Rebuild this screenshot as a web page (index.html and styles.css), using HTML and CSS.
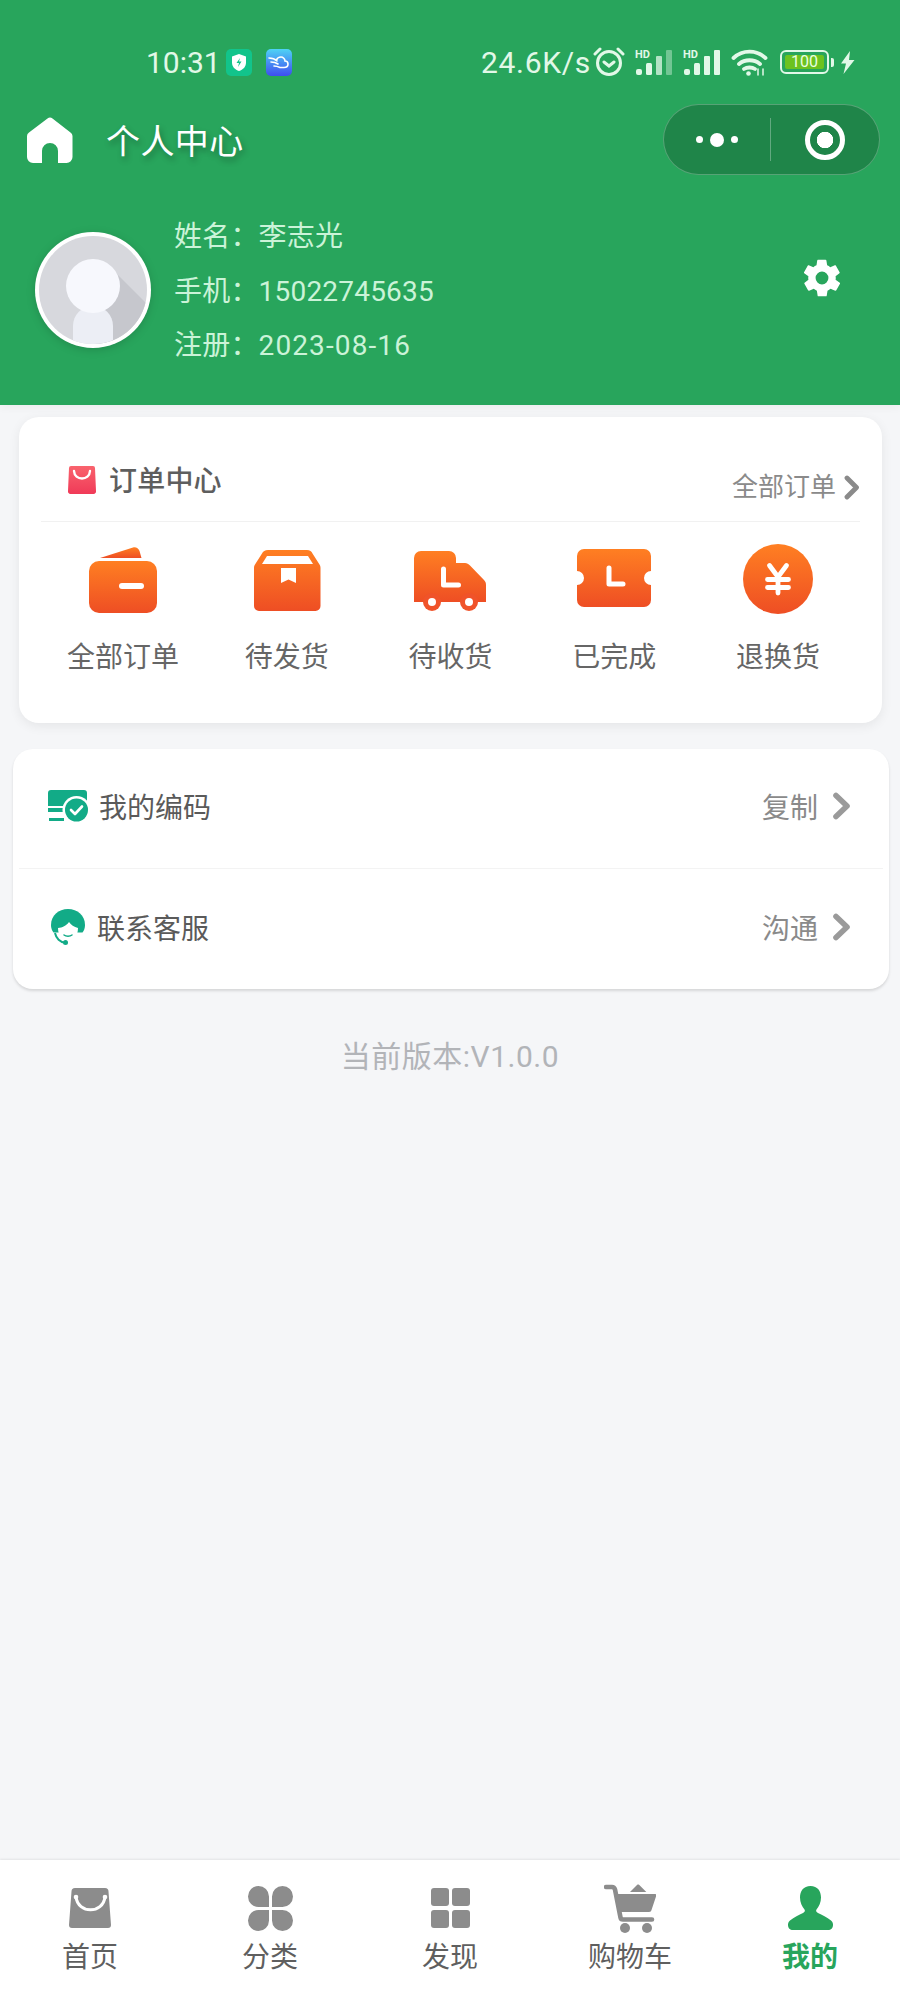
FILE: index.html
```html
<!DOCTYPE html>
<html lang="zh-CN">
<head>
    <meta charset="UTF-8">
    <meta name="viewport" content="width=device-width, initial-scale=1.0">
    <title>个人中心</title>
    <link rel="stylesheet" href="styles.css">
</head>
<body>
    <svg width="0" height="0" class="defs">
        <defs>
            <linearGradient id="orange" x1="0" y1="0" x2="0" y2="1">
                <stop offset="0" stop-color="#ff7f22"/>
                <stop offset="1" stop-color="#ee4e24"/>
            </linearGradient>
            <linearGradient id="pink" x1="0" y1="0" x2="0" y2="1">
                <stop offset="0" stop-color="#f9636d"/>
                <stop offset="1" stop-color="#f03a58"/>
            </linearGradient>
            <linearGradient id="cloud" x1="0" y1="0" x2="0" y2="1">
                <stop offset="0" stop-color="#4fd3f5"/>
                <stop offset="1" stop-color="#3f4cf0"/>
            </linearGradient>
        </defs>
    </svg>

    <div class="header">
        <div class="status-bar">
            <div class="status-left">
                <span class="time">10:31</span>
                <svg class="app-icon" width="26" height="27" viewBox="0 0 26 27">
                    <rect width="26" height="27" rx="5" fill="#12c48b"/>
                    <path d="M13 5l7 2.500v6c0 4.500-3 7-7 8.500-4-1.500-7-4-7-8.500v-6z" fill="#fff"/>
                    <path d="M14 9l-3.500 5h2.500l-1 4 3.500-5.500h-2.500z" fill="#12c48b"/>
                </svg>
                <svg class="app-icon second" width="26" height="27" viewBox="0 0 26 27">
                    <rect width="26" height="27" rx="5" fill="url(#cloud)"/>
                    <path d="M3 9c4 0 6 1 8 3M5 13c3 0 5 .5 7 2M8 17c2 0 4 .5 6 1.500h4c3 0 4-2 4-3.500 0-2-1.500-3-3-3 0-2-2-4-4-4-2.500 0-4 1.500-4.500 3" fill="none" stroke="#fff" stroke-width="1.600" stroke-linecap="round"/>
                </svg>
            </div>
            <div class="status-right">
                <span class="speed">24.6K/s</span>
                <svg class="alarm" width="32" height="30" viewBox="0 0 32 30" fill="none" stroke="#e2f8e8" stroke-width="3" stroke-linecap="round">
                    <circle cx="16" cy="16" r="11.500"/>
                    <path d="M11 15l5 4 5-4M2 7l5-5M30 7l-5-5"/>
                </svg>
                <svg class="signal" width="40" height="26" viewBox="0 0 40 26">
                    <text x="1" y="9" class="hd">HD</text>
                    <rect x="2" y="20" width="6" height="6" rx="2" fill="#e2f8e8"/>
                    <rect x="12" y="14" width="6" height="12" rx="1.500" fill="#e2f8e8"/>
                    <rect x="22" y="7" width="6" height="19" rx="1" fill="#e2f8e8" opacity=".75"/>
                    <rect x="32" y="1" width="6" height="25" rx="1" fill="#e2f8e8" opacity=".4"/>
                </svg>
                <svg class="signal second" width="40" height="26" viewBox="0 0 40 26">
                    <text x="1" y="9" class="hd">HD</text>
                    <rect x="2" y="20" width="6" height="6" rx="2" fill="#e2f8e8"/>
                    <rect x="12" y="14" width="6" height="12" rx="1.500" fill="#e2f8e8"/>
                    <rect x="22" y="7" width="6" height="19" rx="1" fill="#e2f8e8"/>
                    <rect x="32" y="1" width="6" height="25" rx="1" fill="#e2f8e8"/>
                </svg>
                <svg class="wifi" width="37" height="27" viewBox="0 0 37 27" fill="none" stroke="#e2f8e8" stroke-width="3.800" stroke-linecap="round">
                    <path d="M2.500 9c9-8.500 23-8.500 32 0M8 15c6-5 15-5 21 0M13 20c3-2 8-2 11 0"/>
                    <circle cx="17.500" cy="24.500" r="2.300" fill="#e2f8e8" stroke="none"/>
                    <path d="M27 20v6M32 20v6" stroke-width="1.500"/>
                </svg>
                <div class="battery">
                    <div class="battery-body"><span class="battery-level">100</span></div>
                    <div class="battery-tip"></div>
                </div>
                <svg class="bolt" width="15" height="23" viewBox="0 0 15 23">
                    <path d="M10 0L1 12.500h5L3.500 23 14.500 9H9z" fill="#e2f8e8"/>
                </svg>
            </div>
        </div>

        <div class="nav-bar">
            <div class="nav-left">
                <svg class="home-icon" width="46" height="46" viewBox="0 0 46 46">
                    <path d="M20.500 1.500a4 4 0 0 1 5 0l18 14a4 4 0 0 1 2 3.500v21a6 6 0 0 1-6 6H31V34a8 8 0 0 0-16 0v12H6a6 6 0 0 1-6-6V19a4 4 0 0 1 2-3.500z" fill="#fff"/>
                </svg>
                <span class="nav-title">个人中心</span>
            </div>
            <div class="capsule">
                <div class="capsule-more">
                    <span class="dot"></span>
                    <span class="dot big"></span>
                    <span class="dot"></span>
                </div>
                <div class="capsule-close">
                    <span class="target"></span>
                </div>
            </div>
        </div>

        <div class="profile">
            <div class="profile-left">
                <svg class="avatar" width="116" height="116" viewBox="0 0 116 116">
                    <defs><clipPath id="avatarClip"><circle cx="58" cy="58" r="54"/></clipPath></defs>
                    <circle cx="58" cy="58" r="58" fill="#fff"/>
                    <g clip-path="url(#avatarClip)">
                        <rect width="116" height="116" fill="#d7d8dd"/>
                        <path d="M70 30l46 46v40H60z" fill="#c6c7cd"/>
                        <path d="M38 116V94a20 20 0 0 1 40 0v22z" fill="#eceef5"/>
                        <circle cx="58" cy="54" r="27" fill="#f7f8fd"/>
                    </g>
                </svg>
                <div class="user-info">
                    <div class="user-line">姓名：李志光</div>
                    <div class="user-line">手机：15022745635</div>
                    <div class="user-line">注册：<span class="date">2023-08-16</span></div>
                </div>
            </div>
            <svg class="gear" width="44" height="44" viewBox="0 0 24 24">
                <path fill="#fff" fill-rule="evenodd" d="M19.400 13c.1-.3.100-.7.100-1s0-.7-.1-1l2.100-1.600c.2-.2.200-.4.100-.6l-2-3.500c-.1-.2-.4-.3-.6-.2l-2.500 1c-.5-.4-1.100-.7-1.700-1l-.4-2.600c0-.3-.2-.5-.5-.5h-4c-.2 0-.5.200-.5.500l-.4 2.600c-.6.300-1.200.6-1.700 1l-2.500-1c-.2-.1-.5 0-.6.200l-2 3.500c-.1.200-.1.400.1.600L4.600 11c-.1.300-.1.700-.1 1s0 .7.100 1l-2.100 1.600c-.2.200-.2.400-.1.600l2 3.500c.1.200.4.300.6.200l2.500-1c.5.400 1.100.7 1.700 1l.4 2.600c0 .3.300.5.500.5h4c.3 0 .5-.2.500-.5l.4-2.600c.6-.3 1.200-.6 1.700-1l2.500 1c.2.100.5 0 .6-.2l2-3.500c.1-.2.100-.4-.1-.6zM12 15.500a3.500 3.500 0 1 1 0-7 3.500 3.500 0 0 1 0 7z"/>
            </svg>
        </div>
    </div>

    <div class="order-card">
        <div class="order-head">
            <div class="order-title">
                <svg width="28" height="28" viewBox="0 0 28 28">
                    <path d="M3 0h22a2 2 0 0 1 2 2l1 23a2.500 2.500 0 0 1-2.500 3H2.500A2.500 2.500 0 0 1 0 25L1 2a2 2 0 0 1 2-2z" fill="url(#pink)"/>
                    <path d="M6 5c.5 10 15.500 10 16 0" fill="none" stroke="#fff" stroke-width="2.400" stroke-linecap="round"/>
                </svg>
                <span>订单中心</span>
            </div>
            <div class="order-all">
                <span>全部订单</span>
                <svg class="chevron" width="16" height="25" viewBox="0 0 16 25"><path d="M3 3l9.500 9.500L3 22" fill="none" stroke="#8a8a8a" stroke-width="4.800" stroke-linecap="round" stroke-linejoin="round"/></svg>
            </div>
        </div>
        <div class="order-grid">
            <div class="order-item">
                <svg width="72" height="72" viewBox="0 0 72 72">
                    <path d="M13 14L46 3.500c3-.8 5.500 1 6.500 3.500l2 7z" fill="url(#orange)"/>
                    <rect x="2" y="17" width="68" height="52" rx="10" fill="url(#orange)"/>
                    <rect x="32" y="39" width="25" height="6" rx="3" fill="#fff"/>
                </svg>
                <span>全部订单</span>
            </div>
            <div class="order-item">
                <svg width="72" height="72" viewBox="0 0 72 72">
                    <path d="M17 6h39c3 0 4.500 1.500 5.500 3.500l7 11c.6 1 1 2 1 3.500v38a5 5 0 0 1-5 5H8a5 5 0 0 1-5-5V24c0-1.500.4-2.500 1-3.500l7-11C12 7.500 14 6 17 6z" fill="url(#orange)"/>
                    <path d="M16 12h41l5 8H11z" fill="#fff"/>
                    <path d="M30 24h15v15l-7.500-3.500L30 39z" fill="#fff"/>
                </svg>
                <span>待发货</span>
            </div>
            <div class="order-item">
                <svg width="72" height="72" viewBox="0 0 72 72">
                    <path d="M7 7h28a7 7 0 0 1 7 7v5h9c2 0 3.500 1 5 2.500L70 36c1.500 1.500 2 3 2 5v17H0V14a7 7 0 0 1 7-7z" fill="url(#orange)"/>
                    <circle cx="18" cy="58" r="9" fill="#f0532a"/>
                    <circle cx="55" cy="58" r="9" fill="#f0532a"/>
                    <circle cx="18" cy="58" r="4" fill="#fff"/>
                    <circle cx="55" cy="58" r="4" fill="#fff"/>
                    <path d="M29.500 25v16h15" fill="none" stroke="#fff" stroke-width="5" stroke-linecap="round" stroke-linejoin="round"/>
                </svg>
                <span>待收货</span>
            </div>
            <div class="order-item">
                <svg width="74" height="72" viewBox="0 0 74 72">
                    <path d="M7 5h60a7 7 0 0 1 7 7v15a7 7 0 0 0 0 14v15a7 7 0 0 1-7 7H7a7 7 0 0 1-7-7V41a7 7 0 0 0 0-14V12a7 7 0 0 1 7-7z" fill="url(#orange)"/>
                    <path d="M32 24v16h14" fill="none" stroke="#fff" stroke-width="5" stroke-linecap="round" stroke-linejoin="round"/>
                </svg>
                <span>已完成</span>
            </div>
            <div class="order-item">
                <svg width="72" height="72" viewBox="0 0 72 72">
                    <circle cx="36" cy="35" r="35" fill="url(#orange)"/>
                    <path d="M27.500 21.500L36 33l8.500-11.500M36 33v16M25.500 35.500h21M25.500 43.500h21" fill="none" stroke="#fff" stroke-width="4.800" stroke-linecap="round"/>
                </svg>
                <span>退换货</span>
            </div>
        </div>
    </div>

    <div class="menu-card">
        <div class="menu-row">
            <div class="menu-left">
                <svg width="41" height="32" viewBox="0 0 41 32">
                    <path d="M3 0h33a3 3 0 0 1 3 3v13H0V3a3 3 0 0 1 3-3zM0 18h15v4H0zM1 28h15v3H1z" fill="#12ab87"/>
                    <circle cx="28.500" cy="20" r="14" fill="#fff"/>
                    <circle cx="28.500" cy="20" r="11.500" fill="#12ab87"/>
                    <path d="M23 20l4 4 7-7.500" fill="none" stroke="#fff" stroke-width="2.600" stroke-linecap="round" stroke-linejoin="round"/>
                </svg>
                <span>我的编码</span>
            </div>
            <div class="menu-right">
                <span>复制</span>
                <svg class="chevron" width="18" height="28" viewBox="0 0 18 28"><path d="M3 3.500l11 10.500L3 24.500" fill="none" stroke="#9a9a9a" stroke-width="5.600" stroke-linecap="round" stroke-linejoin="round"/></svg>
            </div>
        </div>
        <div class="menu-row">
            <div class="menu-left second">
                <svg width="36" height="36" viewBox="0 0 36 36">
                    <path d="M18 0c9.500 0 17 6.500 17 16 0 3-1 5.500-2.500 7.500h-29C2 21.500 1 19 1 16 1 6.500 8.500 0 18 0z" fill="#12ab87"/>
                    <path d="M8 19c4.500-.5 8-2 11-6 2 3 5 5 9 6 0 8-4.500 13-10 13S8 27 8 19z" fill="#fff"/>
                    <path d="M5 24c1 5 5 9.500 11 10" fill="none" stroke="#12ab87" stroke-width="2"/>
                    <circle cx="15.500" cy="33.500" r="2.500" fill="#12ab87"/>
                    <path d="M14 26c2 1.500 6 1.500 8 0" fill="none" stroke="#12ab87" stroke-width="1.500" stroke-linecap="round"/>
                </svg>
                <span>联系客服</span>
            </div>
            <div class="menu-right">
                <span>沟通</span>
                <svg class="chevron" width="18" height="28" viewBox="0 0 18 28"><path d="M3 3.500l11 10.500L3 24.500" fill="none" stroke="#9a9a9a" stroke-width="5.600" stroke-linecap="round" stroke-linejoin="round"/></svg>
            </div>
        </div>
    </div>

    <div class="version">当前版本:V1.0.0</div>

    <div class="tab-bar">
        <div class="tab">
            <svg width="52" height="52" viewBox="0 0 52 52">
                <path d="M11 6h30a3.500 3.500 0 0 1 3.500 3.500L47 43a3 3 0 0 1-3 3H8a3 3 0 0 1-3-3l2.500-33.500A3.500 3.500 0 0 1 11 6z" fill="#8c8c8c"/>
                <path d="M12 15c2 17 27 17 29 0" fill="none" stroke="#fff" stroke-width="3" stroke-linecap="round"/>
                <circle cx="12" cy="15" r="2.300" fill="#fff"/>
                <circle cx="41" cy="15" r="2.300" fill="#fff"/>
            </svg>
            <span>首页</span>
        </div>
        <div class="tab">
            <svg width="52" height="52" viewBox="0 0 52 52">
                <path d="M25 25H14.500a10.500 10.500 0 1 1 10.500-10.500zM28 25V14.500A10.500 10.500 0 1 1 38.500 25zM25 28V38.500A10.500 10.500 0 1 1 14.500 28zM28 28H38.500A10.500 10.500 0 1 1 28 38.500z" fill="#8c8c8c"/>
            </svg>
            <span>分类</span>
        </div>
        <div class="tab">
            <svg width="52" height="52" viewBox="0 0 52 52">
                <rect x="7" y="6" width="18" height="18" rx="3" fill="#8c8c8c"/>
                <rect x="28" y="6" width="18" height="18" rx="3" fill="#8c8c8c"/>
                <rect x="7" y="28" width="18" height="18" rx="3" fill="#8c8c8c"/>
                <rect x="28" y="28" width="18" height="18" rx="3" fill="#8c8c8c"/>
            </svg>
            <span>发现</span>
        </div>
        <div class="tab">
            <svg width="52" height="52" viewBox="0 0 52 52">
                <path d="M2 5h6c1.500 0 2.500 1 3 2.500l5.500 28c.3 1.500 1 2 2.500 2h29" fill="none" stroke="#8c8c8c" stroke-width="4.600" stroke-linecap="round" stroke-linejoin="round"/>
                <path d="M12 12h39c1 0 1.500.8 1.200 2L47.500 28c-.3 1-1 2-2.500 2H15z" fill="#8c8c8c"/>
                <path d="M26 10l7-7c.8-.6 1.500-.6 2.300 0l7 7z" fill="#8c8c8c"/>
                <circle cx="21" cy="46" r="5" fill="#8c8c8c"/>
                <circle cx="43" cy="46" r="5" fill="#8c8c8c"/>
            </svg>
            <span>购物车</span>
        </div>
        <div class="tab active">
            <svg width="52" height="52" viewBox="0 0 52 52">
                <path d="M26.500 4c7 0 10.500 5 10.500 11.500 0 5-2 9-4.500 12-1 1.500 0 2.500 1.500 3.500 4 2 9 4 13 7.500 2 1.800 2 3.500 2 4.500 0 3-2 5-5 5H9c-3 0-5-2-5-5 0-1 0-2.700 2-4.500 4-3.500 9-5.500 13-7.500 1.500-1 2.500-2 1.500-3.500-2.500-3-4.500-7-4.500-12C16 9 19.500 4 26.500 4z" fill="#28a55c"/>
            </svg>
            <span>我的</span>
        </div>
    </div>
</body>
</html>
```

FILE: styles.css
```css
* {
    box-sizing: border-box;
}

body {
    margin: 0;
    height: 2000px;
    display: flex;
    flex-direction: column;
    font-family: Roboto, 'Noto Sans CJK SC', sans-serif;
    background-color: #f5f6f8;
    color: #5a5a5a;
    overflow: hidden;
}

svg {
    display: block;
    flex-shrink: 0;
}

.defs {
    position: absolute;
}

.header {
    flex-shrink: 0;
    height: 405px;
    padding-top: 40px;
    background-color: #28a55c;
    box-shadow: 0 3px 8px rgba(0, 0, 0, 0.04);
}

/* status bar */
.status-bar {
    display: flex;
    justify-content: space-between;
    align-items: center;
    height: 44px;
    padding: 0 45px 0 146px;
    color: #e2f8e8;
}

.status-left,
.status-right {
    display: flex;
    align-items: center;
}

.time {
    font-size: 30px;
    margin-right: 5px;
}

.app-icon.second {
    margin-left: 14px;
}

.speed {
    font-size: 30px;
    letter-spacing: 0.7px;
    margin-right: 2px;
}

.alarm {
    margin-right: 9px;
}

.signal.second {
    margin-left: 8px;
}

.hd {
    font-size: 11px;
    font-weight: 700;
    fill: #e2f8e8;
}

.wifi {
    margin-left: 9px;
}

.battery {
    display: flex;
    align-items: center;
    margin-left: 12px;
}

.battery-body {
    width: 49px;
    height: 24px;
    padding: 3px;
    border: 2px solid #e2f8e8;
    border-radius: 6px;
}

.battery-level {
    display: block;
    height: 14px;
    background-color: #6cc21f;
    border-radius: 2px;
    font-size: 16px;
    line-height: 14px;
    text-align: center;
    color: #e8ffe0;
}

.battery-tip {
    width: 3px;
    height: 9px;
    margin-left: 2px;
    background-color: #e2f8e8;
    border-radius: 0 2px 2px 0;
}

.bolt {
    margin-left: 6px;
}

/* nav bar */
.nav-bar {
    display: flex;
    justify-content: space-between;
    align-items: center;
    height: 71px;
    margin-top: 20px;
    padding: 0 20px 0 27px;
}

.nav-left {
    display: flex;
    align-items: center;
}

.nav-title {
    margin-left: 33px;
    font-size: 34px;
    letter-spacing: 0.4px;
    color: #fff;
    text-shadow: 2px 4px 6px rgba(0, 0, 0, 0.3);
}

.capsule {
    display: flex;
    align-items: center;
    width: 217px;
    height: 71px;
    background-color: #1f8549;
    border: 1px solid rgba(255, 255, 255, 0.25);
    border-radius: 36px;
}

.capsule-more {
    display: flex;
    justify-content: center;
    align-items: center;
    gap: 7px;
    width: 107px;
    height: 43px;
    border-right: 1px solid rgba(255, 255, 255, 0.3);
}

.dot {
    width: 7px;
    height: 7px;
    background-color: #fff;
    border-radius: 50%;
}

.dot.big {
    width: 14px;
    height: 14px;
}

.capsule-close {
    flex: 1;
    display: flex;
    justify-content: center;
    align-items: center;
}

.target {
    width: 40px;
    height: 40px;
    border: 5px solid #fff;
    border-radius: 50%;
    background: radial-gradient(circle, #fff 0 8px, transparent 8.500px);
}

/* profile */
.profile {
    display: flex;
    justify-content: space-between;
    align-items: center;
    margin-top: 31px;
    padding: 0 56px 0 35px;
}

.profile-left {
    display: flex;
    align-items: center;
}

.avatar {
    filter: drop-shadow(0 2px 4px rgba(0, 0, 0, 0.15));
}

.user-info {
    margin-left: 23px;
    padding-top: 4px;
}

.user-line {
    height: 54.500px;
    line-height: 54.500px;
    font-size: 28px;
    letter-spacing: 0.2px;
    color: #cbf3d8;
}

.date {
    letter-spacing: 1.100px;
}

.gear {
    margin-bottom: 24px;
}

/* order card */
.order-card {
    flex-shrink: 0;
    height: 306px;
    margin: 12px 18px 0 19px;
    padding: 0 22px;
    background-color: #fff;
    border-radius: 20px;
    box-shadow: 0 3px 12px rgba(0, 0, 0, 0.07);
}

.order-head {
    display: flex;
    justify-content: space-between;
    height: 105px;
    padding: 49px 0 0 27px;
    border-bottom: 1px solid #f1f1f1;
}

.order-title {
    display: flex;
    align-items: center;
    height: 28px;
    gap: 13px;
    font-size: 28px;
    font-weight: 500;
    letter-spacing: 0.2px;
    color: #5e5e5e;
}

.order-title span {
    margin-bottom: 2px;
}

.order-all {
    display: flex;
    align-items: center;
    height: 28px;
    margin-top: 7px;
    gap: 8px;
    font-size: 26px;
    color: #8a8a8a;
}

.order-all span {
    margin-bottom: 5px;
}

.order-grid {
    display: grid;
    grid-template-columns: repeat(5, 1fr);
    padding-top: 22px;
}

.order-item {
    display: flex;
    flex-direction: column;
    align-items: center;
    font-size: 28px;
    color: #666;
}

.order-item span {
    margin-top: 22px;
    line-height: 40px;
}

/* menu */
.menu-card {
    flex-shrink: 0;
    margin: 26px 11px 0 13px;
    background-color: #fff;
    border-radius: 20px;
    box-shadow: 0 2px 3px rgba(0, 0, 0, 0.13);
}

.menu-row {
    display: flex;
    justify-content: space-between;
    align-items: center;
    height: 119px;
    padding: 0 38px 5px 35px;
    font-size: 28px;
}

.menu-row + .menu-row {
    height: 121px;
    border-top: 1px solid #f3f3f3;
    margin: 0 6px;
    padding: 0 32px 5px 29px;
}

.menu-left {
    display: flex;
    align-items: center;
    gap: 10px;
    color: #5a5a5a;
}

.menu-left.second {
    gap: 11px;
    margin-left: 2px;
}

.menu-right {
    display: flex;
    align-items: center;
    gap: 15px;
    color: #8a8a8a;
}

.version {
    flex-shrink: 0;
    margin-top: 48px;
    font-size: 30px;
    letter-spacing: 0.5px;
    line-height: 40px;
    text-align: center;
    color: #b2b4b8;
}

/* tab bar */
.tab-bar {
    flex-shrink: 0;
    display: grid;
    grid-template-columns: repeat(5, 1fr);
    height: 140px;
    margin-top: auto;
    padding-top: 22px;
    background-color: #fff;
    box-shadow: 0 -1px 2px rgba(0, 0, 0, 0.08);
}

.tab {
    display: flex;
    flex-direction: column;
    align-items: center;
    font-size: 28px;
    color: #5f5f5f;
}

.tab span {
    margin-top: 4px;
    line-height: 40px;
}

.tab.active {
    color: #28a55c;
    font-weight: 700;
}
```
